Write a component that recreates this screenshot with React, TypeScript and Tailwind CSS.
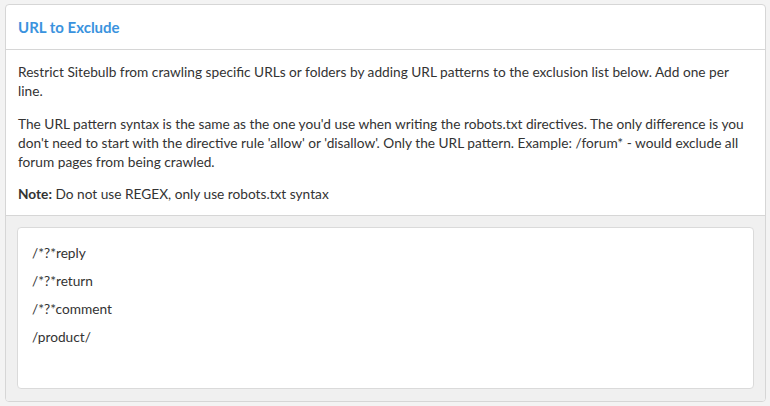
import React from 'react';

const patterns = ['/*?*reply', '/*?*return', '/*?*comment', '/product/'];

export default function App() {
  return (
    <div className="min-h-[406px] w-[770px] bg-[#f3f3f3] pt-[4px] pl-[5px] pr-[4px] text-[#333333] [font-family:Lato,'Liberation_Sans',sans-serif]">
      <div className="overflow-hidden rounded-[4px] border border-[#d6d6d6] bg-white">
        {/* header */}
        <div className="flex h-[45px] items-center border-b border-[#d6d6d6] px-[12px]">
          <h3 className="text-[15px] font-bold text-[#3a93de]">URL to Exclude</h3>
        </div>

        {/* description */}
        <div className="border-b border-[#d6d6d6] px-[12px] pt-[12px] pb-[12px] text-[13.7px] leading-[19px]">
          <p className="mb-[14px]">
            Restrict Sitebulb from crawling specific URLs or folders by adding URL patterns to the exclusion list below. Add one per line.
          </p>
          <p className="mb-[13px]">
            The URL pattern syntax is the same as the one you'd use when writing the robots.txt directives. The only difference is you don't need to start with the directive rule 'allow' or 'disallow'. Only the URL pattern. Example: /forum* - would exclude all forum pages from being crawled.
          </p>
          <p>
            <span className="font-bold">Note:</span> Do not use REGEX, only use robots.txt syntax
          </p>
        </div>

        {/* textarea area */}
        <div className="bg-[#f0f0f0] px-[11px] pt-[11px] pb-[12px]">
          <div className="h-[162px] rounded-[4px] border border-[#dadada] bg-white px-[14px] pt-[11px] text-[13.7px] leading-[28px]">
            {patterns.map((p) => (
              <div key={p}>{p}</div>
            ))}
          </div>
        </div>
      </div>
    </div>
  );
}
